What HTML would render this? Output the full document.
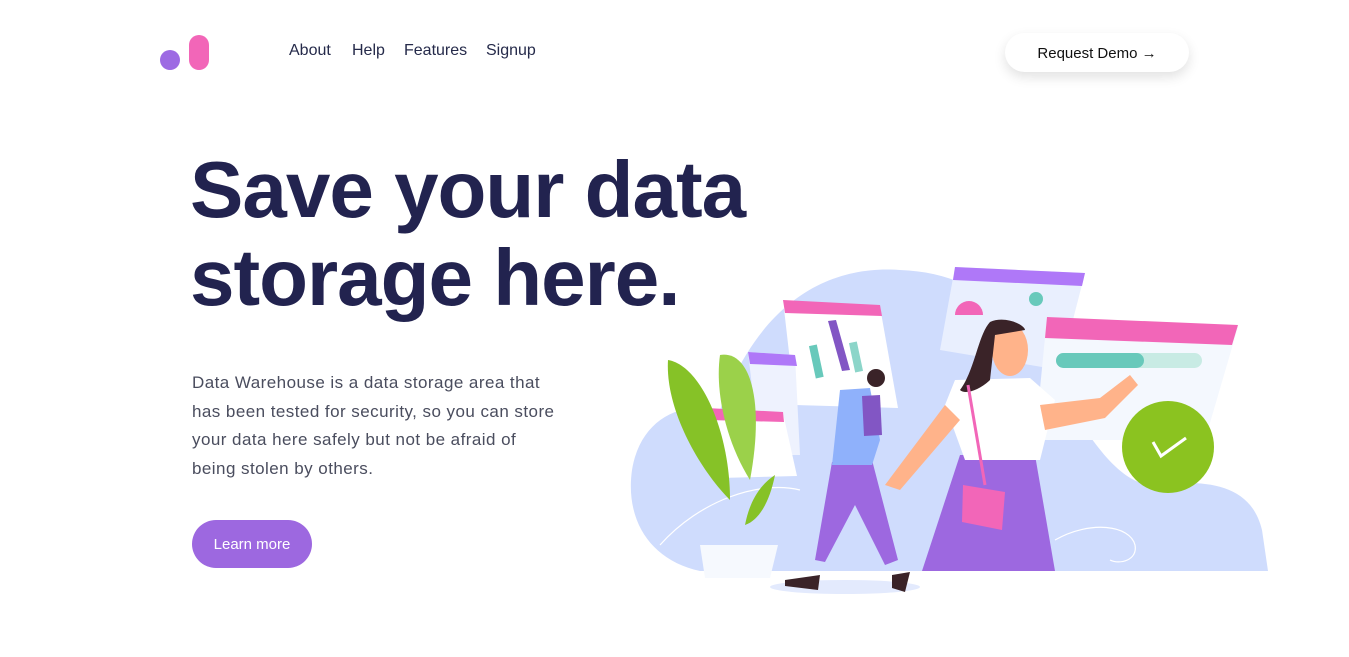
<!DOCTYPE html>
<html><head><meta charset="utf-8"><style>
*{margin:0;padding:0;box-sizing:border-box}
body{width:1349px;height:657px;background:#fff;position:relative;overflow:hidden;font-family:"Liberation Sans",sans-serif}
.nav a{position:absolute;top:42px;font-size:16px;color:#252a4a;text-decoration:none}
h1{position:absolute;left:190px;top:146px;font-size:80px;line-height:88px;font-weight:bold;color:#22234f;letter-spacing:-1px}
p{position:absolute;left:192px;top:369px;width:372px;font-size:17px;line-height:28.5px;color:#4a4d5e;letter-spacing:0.45px}
.btn{position:absolute;left:192px;top:520px;width:120px;height:48px;border-radius:24px;background:#9d68e0;color:#fff;font-size:15px;text-align:center;line-height:50px}
.demo{position:absolute;left:1005px;top:33px;width:184px;height:39px;border-radius:20px;background:#fff;box-shadow:0 5px 12px rgba(0,0,0,.12);font-size:15px;color:#111;text-align:center;line-height:41px}
svg{position:absolute;left:0;top:0}
</style></head><body>
<svg width="1349" height="657" viewBox="0 0 1349 657">
<circle cx="170" cy="60" r="10" fill="#9d6ae3"/>
<rect x="189" y="35" width="20" height="35" rx="10" fill="#f266b8"/>
<path d="M700 571 C650 560 625 520 632 470 C640 420 680 400 720 410 C760 300 830 265 900 270 C960 272 1010 300 1040 360 C1080 420 1110 480 1150 485 C1200 480 1250 480 1262 530 L1268 571 Z" fill="#cfdcfd"/>
<path d="M660 545 C700 500 760 480 800 490" stroke="#fff" stroke-width="1.2" fill="none"/>
<path d="M1055 540 C1090 520 1130 525 1135 545 C1138 560 1120 565 1110 560" stroke="#fff" stroke-width="1.2" fill="none"/>
<ellipse cx="845" cy="587" rx="75" ry="7" fill="#e3eafd"/>
<path d="M955 267 L1085 273 L1060 370 L940 350 Z" fill="#e9effe"/>
<path d="M955 267 L1085 273 L1082 286 L953 280 Z" fill="#af78f8"/>
<circle cx="1036" cy="299" r="7" fill="#68c9bb"/>
<path d="M955 315 a14 14 0 0 1 28 0 Z" fill="#f266b8"/>
<path d="M783 300 L880 307 L898 408 L795 405 Z" fill="#fff"/>
<path d="M783 300 L880 305 L882 316 L785 313 Z" fill="#f266b8"/>
<path d="M828 321 L836 320 L850 370 L842 371 Z" fill="#8256c4"/>
<rect x="812" y="345" width="8" height="33" fill="#68c9bb" transform="rotate(-12 816 360)"/>
<rect x="852" y="342" width="8" height="30" fill="#8cd5c9" transform="rotate(-12 856 357)"/>
<path d="M748 352 L795 355 L800 455 L760 455 Z" fill="#eef2fe"/>
<path d="M748 352 L795 355 L797 366 L750 364 Z" fill="#af78f8"/>
<path d="M706 410 L783 413 L797 476 L720 478 Z" fill="#fff"/>
<path d="M706 408 L783 412 L784 422 L708 420 Z" fill="#f266b8"/>
<path d="M1047 317 L1238 327 L1205 440 L1035 440 Z" fill="#f4f8fe"/>
<path d="M1047 317 L1238 325 L1232 345 L1045 338 Z" fill="#f266b8"/>
<rect x="1056" y="353" width="146" height="15" rx="7.5" fill="#c8ebe4"/>
<rect x="1056" y="353" width="88" height="15" rx="7.5" fill="#68c9bb"/>
<circle cx="1168" cy="447" r="46" fill="#8bc320"/>
<path d="M1153 442 L1161 456 L1186 438" stroke="#fff" stroke-width="3" fill="none"/>
<path d="M668 360 C700 365 730 430 730 500 C700 470 665 410 668 360 Z" fill="#86c227"/>
<path d="M720 355 C750 350 765 400 750 480 C725 440 715 390 720 355 Z" fill="#9bd14a"/>
<path d="M775 475 C770 500 760 520 745 525 C750 500 760 485 775 475 Z" fill="#86c227"/>
<path d="M700 545 L778 545 L770 578 L705 578 Z" fill="#f6f9fe"/>
<path d="M832 462 L872 460 L898 560 L885 565 L855 505 L825 562 L815 560 Z" fill="#9d68e0"/>
<path d="M840 390 L870 388 L880 440 L872 465 L832 465 Z" fill="#8fb1fb"/>
<path d="M862 396 L880 395 L882 435 L864 436 Z" fill="#8256c4"/>
<circle cx="876" cy="378" r="9" fill="#3a2328"/>
<path d="M785 580 L820 575 L818 590 L785 586 Z M892 575 L910 572 L905 592 L892 588 Z" fill="#3a2328"/>
<path d="M960 455 L1035 455 L1055 571 L922 571 Z" fill="#9d68e0"/>
<path d="M955 380 L1030 378 L1055 400 L1040 460 L965 460 L945 405 Z" fill="#fff"/>
<path d="M1040 405 L1100 398 L1130 375 L1138 385 L1105 418 L1045 430 Z" fill="#ffb38a"/>
<path d="M945 405 L960 420 L900 490 L885 485 Z" fill="#ffb38a"/>
<ellipse cx="1010" cy="350" rx="18" ry="26" fill="#ffb38a"/>
<path d="M990 322 C1005 315 1025 325 1025 330 L995 335 L990 380 C980 390 965 395 960 390 C975 370 978 335 990 322 Z" fill="#3a2328"/>
<path d="M963 485 L1005 492 L1002 530 L962 522 Z" fill="#f266b8"/>
<path d="M968 385 L985 485" stroke="#f266b8" stroke-width="3" fill="none"/>
</svg>
<div class="nav"><a style="left:289px">About</a><a style="left:352px">Help</a><a style="left:404px">Features</a><a style="left:486px">Signup</a></div>
<div class="demo">Request Demo →</div>
<h1>Save your data<br>storage here.</h1>
<p>Data Warehouse is a data storage area that has been tested for security, so you can store your data here safely but not be afraid of being stolen by others.</p>
<div class="btn">Learn more</div>
</body></html>
